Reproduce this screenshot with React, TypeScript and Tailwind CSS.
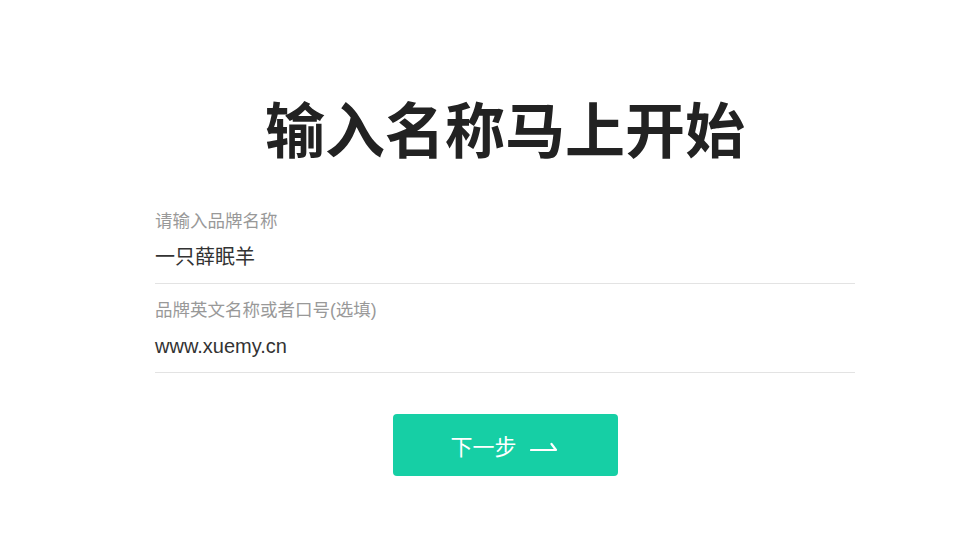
import React from "react";

export default function App() {
  return (
    <div className="w-[980px] h-[560px] bg-white overflow-hidden">
      <div className="ml-[155px] w-[700px] pt-[87px] font-['Liberation_Sans','Noto_Sans_CJK_SC',sans-serif]">
        <h1 className="h-[80px] leading-[80px] text-center text-[60px] font-bold text-[#222222] font-['Noto_Sans_CJK_SC',sans-serif]">
          输入名称马上开始
        </h1>
        <div className="mt-[28px]">
          <div className="pt-[14px] pb-[11px] border-b border-[#e3e3e3]">
            <div className="h-[24px] leading-[24px] text-[17.5px] text-[#999999]">请输入品牌名称</div>
            <div className="mt-[9px] h-[30px] leading-[30px] text-[20px] text-[#333333]">一只薛眠羊</div>
          </div>
          <div className="pt-[14px] pb-[11px] border-b border-[#e3e3e3]">
            <div className="h-[24px] leading-[24px] text-[17.5px] text-[#999999]">品牌英文名称或者口号(选填)</div>
            <div className="mt-[9px] h-[30px] leading-[30px] text-[20px] text-[#333333]">www.xuemy.cn</div>
          </div>
        </div>
        <div className="mt-[41px] flex justify-center">
          <button className="w-[225px] h-[62px] rounded-[4px] bg-[#16cfa5] flex items-center justify-center text-white text-[22px] pr-[2px]">
            <span className="font-['Noto_Sans_CJK_SC',sans-serif]">下一步</span>
            <svg className="ml-[13px] mt-[4px]" width="28" height="10" viewBox="0 0 28 10" fill="none">
              <path d="M1 8 H26 L21.5 2" stroke="white" strokeWidth="2.2" strokeLinecap="round" strokeLinejoin="round" />
            </svg>
          </button>
        </div>
      </div>
    </div>
  );
}
